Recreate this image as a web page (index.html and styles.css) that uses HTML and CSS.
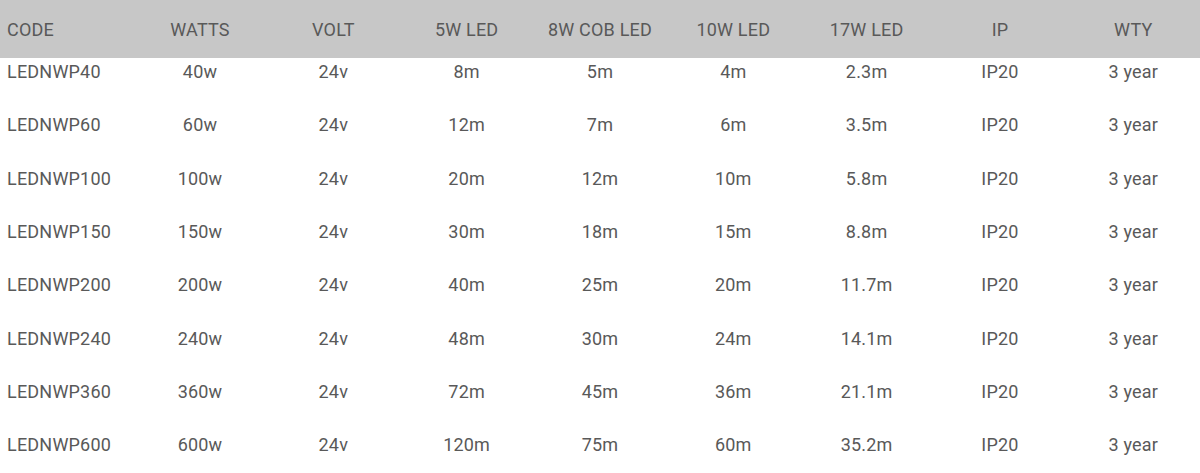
FILE: index.html
```html
<!DOCTYPE html>
<html>
<head>
<meta charset="utf-8">
<link rel="stylesheet" href="styles.css">
</head>
<body>
<table class="spec">
<thead>
<tr><th>CODE</th><th>WATTS</th><th>VOLT</th><th>5W LED</th><th>8W COB LED</th><th>10W LED</th><th>17W LED</th><th>IP</th><th>WTY</th></tr>
</thead>
<tbody>
<tr><td>LEDNWP40</td><td>40w</td><td>24v</td><td>8m</td><td>5m</td><td>4m</td><td>2.3m</td><td>IP20</td><td>3 year</td></tr>
<tr><td>LEDNWP60</td><td>60w</td><td>24v</td><td>12m</td><td>7m</td><td>6m</td><td>3.5m</td><td>IP20</td><td>3 year</td></tr>
<tr><td>LEDNWP100</td><td>100w</td><td>24v</td><td>20m</td><td>12m</td><td>10m</td><td>5.8m</td><td>IP20</td><td>3 year</td></tr>
<tr><td>LEDNWP150</td><td>150w</td><td>24v</td><td>30m</td><td>18m</td><td>15m</td><td>8.8m</td><td>IP20</td><td>3 year</td></tr>
<tr><td>LEDNWP200</td><td>200w</td><td>24v</td><td>40m</td><td>25m</td><td>20m</td><td>11.7m</td><td>IP20</td><td>3 year</td></tr>
<tr><td>LEDNWP240</td><td>240w</td><td>24v</td><td>48m</td><td>30m</td><td>24m</td><td>14.1m</td><td>IP20</td><td>3 year</td></tr>
<tr><td>LEDNWP360</td><td>360w</td><td>24v</td><td>72m</td><td>45m</td><td>36m</td><td>21.1m</td><td>IP20</td><td>3 year</td></tr>
<tr><td>LEDNWP600</td><td>600w</td><td>24v</td><td>120m</td><td>75m</td><td>60m</td><td>35.2m</td><td>IP20</td><td>3 year</td></tr>
</tbody>
</table>
</body>
</html>
```
FILE: styles.css
```css
html, body {
  margin: 0;
  padding: 0;
  background: #ffffff;
}
body {
  font-family: Roboto, "Liberation Sans", sans-serif;
  color: #595959;
  font-size: 18px;
  letter-spacing: 0.2px;
}
.spec {
  width: 1200px;
  border-collapse: collapse;
  table-layout: fixed;
}
.spec th {
  background: #c7c7c7;
  font-weight: 400;
  height: 58px;
  padding: 0;
  text-align: center;
  vertical-align: middle;
}
.spec td {
  height: 53.33px;
  padding: 3px 0 0 0;
  box-sizing: border-box;
  text-align: center;
  vertical-align: top;
  line-height: 22px;
}
.spec th:first-child,
.spec td:first-child {
  text-align: left;
  padding-left: 7px;
}
```
